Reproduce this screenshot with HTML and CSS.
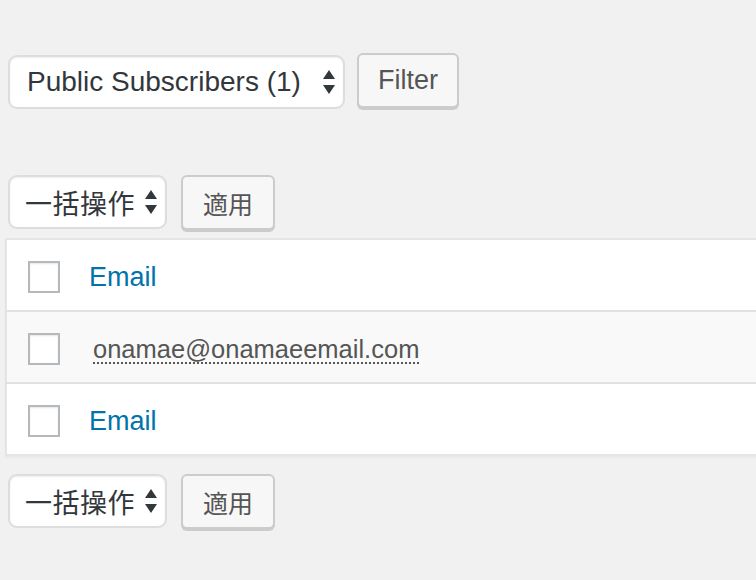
FILE: index.html
```html
<!DOCTYPE html>
<html lang="ja">
<head>
  <meta charset="UTF-8" />
  <title>Subscribers</title>
  <meta name="viewport" content="width=device-width, initial-scale=1" />
  <link rel="stylesheet" href="styles.css">
</head>
<body>
  <main class="wrap">
    <!-- list filter -->
    <div class="actions filter-row">
      <div class="select select-list">
        <span>Public Subscribers (1)</span>
        <svg class="arrows" viewBox="0 0 14 26" width="14" height="26"><path d="M7 1 L13 10 H1 Z M1 16 H13 L7 25 Z"/></svg>
      </div>
      <button class="button">Filter</button>
    </div>

    <!-- bulk actions (top) -->
    <div class="actions bulk-row">
      <div class="select select-bulk">
        <span class="cjk">一括操作</span>
        <svg class="arrows" viewBox="0 0 14 26" width="14" height="26"><path d="M7 1 L13 10 H1 Z M1 16 H13 L7 25 Z"/></svg>
      </div>
      <button class="button cjk">適用</button>
    </div>

    <table class="subscribers">
      <thead>
        <tr>
          <td class="check"><span class="checkbox"></span></td>
          <th><a href="#">Email</a></th>
        </tr>
      </thead>
      <tbody>
        <tr class="alt">
          <td class="check"><span class="checkbox"></span></td>
          <td><abbr title="onamae@onamaeemail.com">onamae@onamaeemail.com</abbr></td>
        </tr>
      </tbody>
      <tfoot>
        <tr>
          <td class="check"><span class="checkbox"></span></td>
          <th><a href="#">Email</a></th>
        </tr>
      </tfoot>
    </table>

    <!-- bulk actions (bottom) -->
    <div class="actions bulk-row bottom">
      <div class="select select-bulk">
        <span class="cjk">一括操作</span>
        <svg class="arrows" viewBox="0 0 14 26" width="14" height="26"><path d="M7 1 L13 10 H1 Z M1 16 H13 L7 25 Z"/></svg>
      </div>
      <button class="button cjk">適用</button>
    </div>
  </main>
</body>
</html>
```

FILE: styles.css
```css
html,body{margin:0;height:100%;background:#f1f1f1;color:#32373c;font-family:"Liberation Sans",Arial,"Noto Sans CJK JP",sans-serif;overflow:hidden}
.wrap{padding:53px 0 0 8px}
.cjk{font-family:"Noto Sans CJK JP","Liberation Sans",sans-serif}

.actions{display:flex;align-items:flex-start}
.filter-row{gap:12px}
.bulk-row{gap:14px;margin-top:66px}
.bulk-row.bottom{margin-top:18px}

/* fake select boxes */
.select{box-sizing:border-box;height:54px;display:flex;align-items:center;justify-content:space-between;background:#fff;border:2px solid #ddd;border-radius:9px;box-shadow:inset 0 1px 2px rgba(0,0,0,.07);color:#32373c}
.filter-row .select{margin-top:2px}
.select-list{width:337px;padding:0 7px 0 17px;font-size:28px}
.select-bulk{width:159px;padding:0 7px 0 15px;font-size:27px}
.select-bulk span{letter-spacing:0.5px}
.arrows{fill:#32373c;flex:none}

.button{box-sizing:border-box;height:55px;padding:0 19px;background:#f7f7f7;border:2px solid #ccc;border-radius:6px;box-shadow:0 2px 0 #ccc;color:#555;font-size:27px;font-family:"Liberation Sans",Arial,sans-serif}
.button.cjk{width:94px;padding:0;font-size:25px;font-family:"Noto Sans CJK JP",sans-serif}

/* list table */
.subscribers{width:760px;margin:8px 0 0 -3px;border-collapse:collapse;background:#fff;border:2px solid #e5e5e5;box-shadow:0 2px 2px rgba(0,0,0,.04)}
.subscribers tr{height:72px}
.subscribers thead tr,.subscribers tbody tr{border-bottom:2px solid #e1e1e1}
.subscribers tr.alt{background:#f9f9f9}
.subscribers td,.subscribers th{padding:4px 0 0;text-align:left;font-weight:normal;vertical-align:middle}
.check{width:82px}
.checkbox{display:block;box-sizing:border-box;width:32px;height:32px;margin-left:21px;background:#fff;border:2px solid #b4b9be;box-shadow:inset 0 1px 2px rgba(0,0,0,.1)}
.subscribers a{color:#0073aa;text-decoration:none;font-size:27px}
abbr{color:#555;font-size:25.5px;margin-left:4px;text-decoration:underline dotted;text-decoration-thickness:2px;text-underline-offset:5px}
```
